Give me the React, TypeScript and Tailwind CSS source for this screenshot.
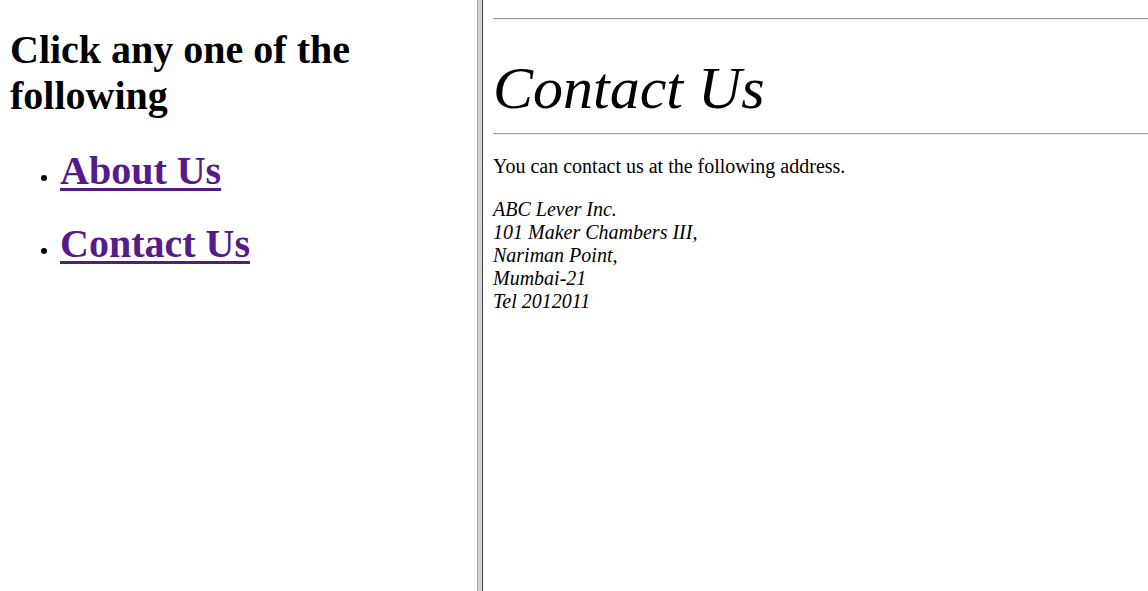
export default function App() {
  return (
    <div className="flex h-[591px] w-[1148px] overflow-hidden bg-white text-black font-['Liberation_Serif','Times_New_Roman',serif]">
      {/* left frame */}
      <div className="w-[477px] shrink-0 px-[10px]">
        <h1 className="mt-[27px] text-[40px] font-bold leading-[46px]">
          Click any one of the following
        </h1>
        <ul className="mt-[29px] list-disc pl-[50px] text-[20px]">
          <li className="mb-[27px]">
            <h1 className="text-[40px] font-bold leading-[46px]">
              <a href="#about" className="text-[#551a8b] underline decoration-[3px] underline-offset-[4px]">
                About Us
              </a>
            </h1>
          </li>
          <li>
            <h1 className="text-[40px] font-bold leading-[46px]">
              <a href="#contact" className="text-[#551a8b] underline decoration-[3px] underline-offset-[4px]">
                Contact Us
              </a>
            </h1>
          </li>
        </ul>
      </div>

      {/* frame divider */}
      <div className="flex shrink-0">
        <div className="w-px bg-[#a0a0a0]" />
        <div className="w-[4px] bg-[#d4d4d4]" />
        <div className="w-px bg-[#404040]" />
      </div>

      {/* right frame */}
      <div className="flex-1 pl-[10px]">
        <hr className="mt-[18px] border-t border-b border-t-[#9a9a9a] border-b-[#eeeeee]" />
        <h1 className="mt-[34px] text-[60px] italic font-normal leading-[69px]">Contact Us</h1>
        <hr className="mt-[10px] border-t border-b border-t-[#9a9a9a] border-b-[#eeeeee]" />
        <p className="mt-[20px] text-[20px] leading-[23px]">You can contact us at the following address.</p>
        <p className="mt-[20px] text-[20px] italic leading-[23px]">
          ABC Lever Inc.
          <br />
          101 Maker Chambers III,
          <br />
          Nariman Point,
          <br />
          Mumbai-21
          <br />
          Tel 2012011
        </p>
      </div>
    </div>
  );
}
